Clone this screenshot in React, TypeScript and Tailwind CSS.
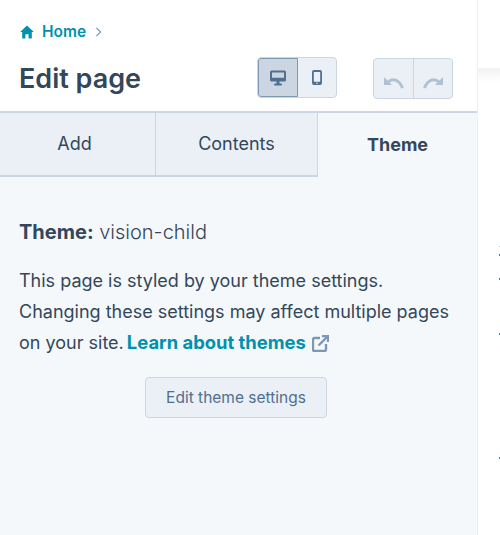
const font = "font-['Inter','Liberation_Sans',sans-serif]";

function HomeIcon() {
  return (
    <svg viewBox="0 0 14 14" className="h-[14px] w-[14px] fill-[#0091ae]">
      <path d="M7 .4 13.800 7h-2v6.400H8.600V9.300H5.400v4.100H2.200V7H.2z" />
    </svg>
  );
}

function DesktopIcon() {
  return (
    <svg viewBox="0 0 16 16" className="h-[16px] w-[16px] fill-[#516f90]">
      <path d="M1.500.500h13A1.500 1.500 0 0 1 16 2v8a1.500 1.500 0 0 1-1.500 1.500h-13A1.500 1.500 0 0 1 0 10V2A1.500 1.500 0 0 1 1.500.500zm.5 2V7.800h12V2.500z" />
      <rect x="6.500" y="11" width="3" height="3" />
      <rect x="4" y="13.400" width="8" height="2.200" rx="1.100" />
    </svg>
  );
}

function PhoneIcon() {
  return (
    <svg viewBox="0 0 10 15" className="h-[15px] w-[10px] fill-[#516f90]">
      <path d="M2 0h6a2 2 0 0 1 2 2v11a2 2 0 0 1-2 2H2a2 2 0 0 1-2-2V2a2 2 0 0 1 2-2zm-.2 2v9.800h6.400V2z" />
      <circle cx="5" cy="13.300" r="0.800" fill="#eaf0f6" />
    </svg>
  );
}

function UndoIcon({ flip }: { flip?: boolean }) {
  return (
    <svg viewBox="0 0 20 13" className={"h-[13px] w-[20px] " + (flip ? "-scale-x-100" : "")}>
      <path d="M0 1v8h8z" fill="#b0c1d4" />
      <path d="M3.500 6.500C8.500 1.800 15 3.200 18.500 12" fill="none" stroke="#b0c1d4" strokeWidth="3" />
    </svg>
  );
}

function LinkOutIcon() {
  return (
    <svg viewBox="0 0 17 17" className="ml-[6px] inline-block h-[17px] w-[17px] -translate-y-[1px] fill-none stroke-[#7c98b6] stroke-[2.400]">
      <path d="M8 3H2.500A1.500 1.500 0 0 0 1 4.500v10A1.500 1.500 0 0 0 2.500 16h10a1.500 1.500 0 0 0 1.500-1.500V9" />
      <path d="M6.500 10.500 15.500 1.500M10 1h6v6" />
    </svg>
  );
}

export default function App() {
  return (
    <div className={"flex h-[535px] w-[500px] overflow-hidden bg-white text-[#33475b] " + font}>
      <div className="flex w-[478px] shrink-0 flex-col border-r border-[#eaf0f6]">
        <header className="h-[113px] shrink-0 border-b-2 border-[#cbd6e2] bg-white pl-[20px]">
          <div className="flex h-[63px] items-center">
            <HomeIcon />
            <span className="ml-[8px] text-[15.500px] font-semibold text-[#0091ae]">Home</span>
            <svg viewBox="0 0 8 12" className="ml-[9px] h-[10px] w-[7px] fill-none stroke-[#7c98b6] stroke-[1.500]">
              <path d="M1.500 1 6.500 6l-5 5" />
            </svg>
          </div>
          <div className="-mt-[2px] flex items-start">
            <h1 className="mt-[2px] -ml-[1px] w-[238px] text-[27px] leading-[32px] font-semibold">Edit page</h1>
            <div className="-mt-[4px] flex h-[41px] w-[80px] overflow-hidden rounded-[4px] border border-[#cbd6e2] bg-[#eaf0f6]">
              <div className="flex w-[40px] items-center justify-center rounded-l-[3px] border border-[#7c98b6] bg-[#cbd6e2]">
                <DesktopIcon />
              </div>
              <div className="flex flex-1 items-center justify-center">
                <PhoneIcon />
              </div>
            </div>
            <div className="-mt-[3px] ml-[36px] flex h-[41px] w-[80px] rounded-[4px] border border-[#cbd6e2] bg-[#eaf0f6]">
              <div className="flex w-[40px] items-center justify-center border-r border-[#cbd6e2] pt-[7px]">
                <UndoIcon />
              </div>
              <div className="flex flex-1 items-center justify-center pt-[7px]">
                <UndoIcon flip />
              </div>
            </div>
          </div>
        </header>

        <div className="flex h-[64px] shrink-0 bg-[#f5f8fa] text-[18px]">
          <div className="flex w-[156px] items-center justify-center border-r border-b-2 border-[#cbd6e2] bg-[#eaf0f6] pr-[6px] pb-[2px]">Add</div>
          <div className="flex w-[162px] items-center justify-center border-r border-b-2 border-[#cbd6e2] bg-[#eaf0f6] pb-[2px]">Contents</div>
          <div className="flex flex-1 items-center justify-center pb-[2px] font-bold">Theme</div>
        </div>

        <div className="flex-1 bg-[#f5f8fa] pt-[39px] pl-[19px]">
          <p className="text-[20px] leading-[32px]">
            <span className="font-bold">Theme:</span> <span className="font-light">vision-child</span>
          </p>
          <p className="mt-[17px] w-[445px] text-[18px] leading-[31px] whitespace-nowrap">
            This page is styled by your theme settings.
            <br />
            Changing these settings may affect multiple pages
            <br />
            on your site.{" "}
            <span className="-ml-[2px] text-[18.400px] font-bold text-[#0091ae]">Learn about themes</span>
            <LinkOutIcon />
          </p>
          <div className="mt-[19px] ml-[126px] flex h-[41px] w-[182px] items-center justify-center rounded-[4px] border border-[#cbd6e2] bg-[#eaf0f6] pt-[1px] text-[15.500px] text-[#506e91]">
            Edit theme settings
          </div>
        </div>
      </div>

      <div className="flex flex-1 flex-col items-end">
        <div className="mt-[68px] h-[14px] w-full bg-gradient-to-b from-[#f2f2f2] to-white" />
        <div className="mt-[164px] h-[1px] w-[1px] bg-[#c5cdd5]" />
        <div className="mt-[7px] h-[2px] w-[1px] bg-[#5d7186]" />
        <div className="mt-[22px] h-[2px] w-[1px] bg-[#5d7186]" />
        <div className="mt-[53px] h-[2px] w-[1px] bg-[#5d7186]" />
        <div className="mt-[122px] h-[2px] w-[1px] bg-[#5d7186]" />
      </div>
    </div>
  );
}
